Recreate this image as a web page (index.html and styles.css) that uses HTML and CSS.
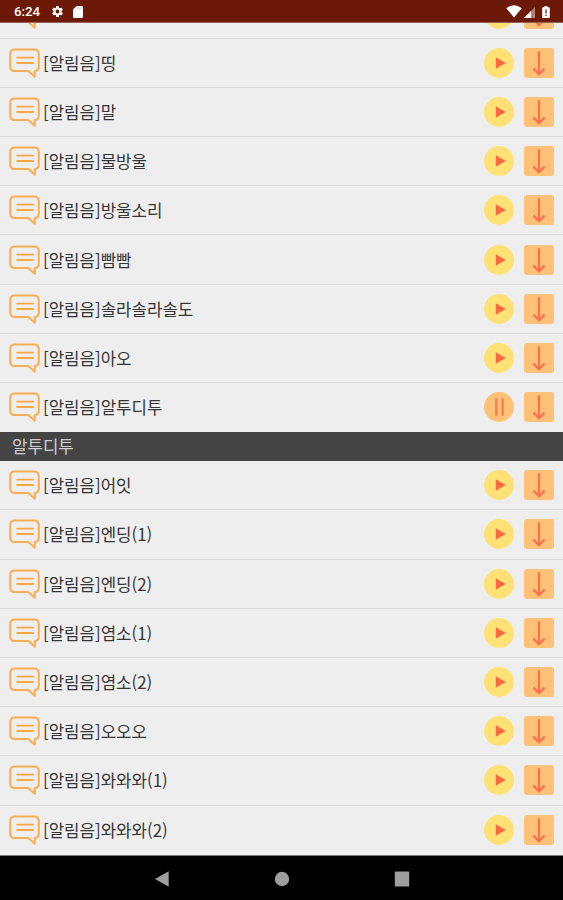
FILE: index.html
```html
<!DOCTYPE html>
<html lang="ko">
<head>
<meta charset="utf-8">
<meta name="viewport" content="width=device-width, initial-scale=1">
<title>알림음</title>
<link rel="stylesheet" href="styles.css">
</head>
<body>
<svg class="defs" aria-hidden="true">
  <symbol id="bubble" viewBox="0 0 32 32">
    <path d="M6.500 2.400H26Q30.800 2.400 30.800 7.200V19.200Q30.800 24 26.800 24V29.800L20.300 24H6.500Q2.200 24 2.200 19.200V7.200Q2.200 2.400 6.500 2.400Z" fill="none" stroke="#fcad53" stroke-width="2" stroke-linejoin="round"/>
    <path d="M9 10.600H25.200M9 16H25.200" fill="none" stroke="#fba742" stroke-width="1.900" stroke-linecap="round"/>
  </symbol>
  <symbol id="play" viewBox="0 0 30 30">
    <circle cx="15" cy="15" r="15" fill="#ffe175"/>
    <path d="M11.800 9.300L21.800 15L11.800 20.700Z" fill="#fd6840"/>
  </symbol>
  <symbol id="pause" viewBox="0 0 30 30">
    <circle cx="15" cy="15" r="15" fill="#ffc178"/>
    <path d="M12.300 6.200V23.800M18.600 6.200V23.800" stroke="#fd7950" stroke-width="2.300"/>
  </symbol>
  <symbol id="down" viewBox="0 0 30 30">
    <rect width="30" height="30" rx="3" fill="#ffc178"/>
    <path d="M15 3.200V26M9.400 20.600L15 26.200L20.600 20.600" fill="none" stroke="#fd704a" stroke-width="2.200"/>
  </symbol>
</svg>
<header class="status">
  <span class="clock">6:24</span>
  <svg class="gear" viewBox="0 0 24 24"><path fill="#fff" fill-rule="evenodd" d="M19.4 13a7.500 7.500 0 0 0 0-2l2.100-1.600a.5.5 0 0 0 .1-.6l-2-3.500a.5.5 0 0 0-.6-.2l-2.500 1a7 7 0 0 0-1.700-1L14.500 2.400a.5.5 0 0 0-.5-.4h-4a.5.5 0 0 0-.5.4L9.100 5.100a7 7 0 0 0-1.700 1l-2.500-1a.5.5 0 0 0-.6.2l-2 3.500a.5.5 0 0 0 .1.6L4.600 11a7.500 7.500 0 0 0 0 2l-2.100 1.600a.5.5 0 0 0-.1.6l2 3.500c.1.200.4.300.6.200l2.500-1a7 7 0 0 0 1.700 1l.4 2.700c0 .2.200.4.500.4h4c.200 0 .4-.2.500-.4l.4-2.700a7 7 0 0 0 1.700-1l2.500 1c.2.100.5 0 .6-.2l2-3.500a.5.5 0 0 0-.1-.6ZM12 8.500a3.500 3.500 0 1 1 0 7a3.500 3.500 0 0 1 0-7Z"/></svg>
  <svg class="card" viewBox="0 0 10 12"><path fill="#fff" d="M3.500 0H9q1 0 1 1V11q0 1-1 1H1q-1 0-1-1V3.500Z"/><path d="M4.200 1.500V3.500M6.200 1.500V3.500M8.200 1.500V3.500" stroke="#c9a59c" stroke-width=".7"/></svg>
  <span class="spacer"></span>
  <svg class="wifi" viewBox="0 0 16 13"><path fill="#fff" d="M8 12.500L.3 3.200Q8-2.600 15.700 3.200Z"/></svg>
  <svg class="signal" viewBox="0 0 11 11"><path fill="#b18278" d="M0 11L11 0V11Z"/><path fill="#fff" d="M0 11L7 4V11Z"/></svg>
  <svg class="battery" viewBox="0 0 8 12"><path fill="#fff" d="M2.500 0H5.500V1.300H7q.8 0 .8.8V11.200q0 .8-.8.8H1q-.8 0-.8-.8V2.100q0-.8.8-.8H2.500Z"/><path d="M4 3.500V7.500M4 8.700V10" stroke="#6d1907" stroke-width="1.300"/></svg>
</header>
<main class="list">
  <div class="row first"><svg class="bubble"><use href="#bubble"/></svg><span class="name"></span><svg class="btn"><use href="#play"/></svg><svg class="btn"><use href="#down"/></svg></div>
  <div class="row"><svg class="bubble"><use href="#bubble"/></svg><span class="name">[알림음]띵</span><svg class="btn"><use href="#play"/></svg><svg class="btn"><use href="#down"/></svg></div>
  <div class="row"><svg class="bubble"><use href="#bubble"/></svg><span class="name">[알림음]말</span><svg class="btn"><use href="#play"/></svg><svg class="btn"><use href="#down"/></svg></div>
  <div class="row"><svg class="bubble"><use href="#bubble"/></svg><span class="name">[알림음]물방울</span><svg class="btn"><use href="#play"/></svg><svg class="btn"><use href="#down"/></svg></div>
  <div class="row"><svg class="bubble"><use href="#bubble"/></svg><span class="name">[알림음]방울소리</span><svg class="btn"><use href="#play"/></svg><svg class="btn"><use href="#down"/></svg></div>
  <div class="row"><svg class="bubble"><use href="#bubble"/></svg><span class="name">[알림음]빰빰</span><svg class="btn"><use href="#play"/></svg><svg class="btn"><use href="#down"/></svg></div>
  <div class="row"><svg class="bubble"><use href="#bubble"/></svg><span class="name">[알림음]솔라솔라솔도</span><svg class="btn"><use href="#play"/></svg><svg class="btn"><use href="#down"/></svg></div>
  <div class="row"><svg class="bubble"><use href="#bubble"/></svg><span class="name">[알림음]아오</span><svg class="btn"><use href="#play"/></svg><svg class="btn"><use href="#down"/></svg></div>
  <div class="row last"><svg class="bubble"><use href="#bubble"/></svg><span class="name">[알림음]알투디투</span><svg class="btn"><use href="#pause"/></svg><svg class="btn"><use href="#down"/></svg></div>
  <div class="playing">알투디투</div>
  <div class="row"><svg class="bubble"><use href="#bubble"/></svg><span class="name">[알림음]어잇</span><svg class="btn"><use href="#play"/></svg><svg class="btn"><use href="#down"/></svg></div>
  <div class="row"><svg class="bubble"><use href="#bubble"/></svg><span class="name">[알림음]엔딩(1)</span><svg class="btn"><use href="#play"/></svg><svg class="btn"><use href="#down"/></svg></div>
  <div class="row"><svg class="bubble"><use href="#bubble"/></svg><span class="name">[알림음]엔딩(2)</span><svg class="btn"><use href="#play"/></svg><svg class="btn"><use href="#down"/></svg></div>
  <div class="row"><svg class="bubble"><use href="#bubble"/></svg><span class="name">[알림음]염소(1)</span><svg class="btn"><use href="#play"/></svg><svg class="btn"><use href="#down"/></svg></div>
  <div class="row"><svg class="bubble"><use href="#bubble"/></svg><span class="name">[알림음]염소(2)</span><svg class="btn"><use href="#play"/></svg><svg class="btn"><use href="#down"/></svg></div>
  <div class="row"><svg class="bubble"><use href="#bubble"/></svg><span class="name">[알림음]오오오</span><svg class="btn"><use href="#play"/></svg><svg class="btn"><use href="#down"/></svg></div>
  <div class="row"><svg class="bubble"><use href="#bubble"/></svg><span class="name">[알림음]와와와(1)</span><svg class="btn"><use href="#play"/></svg><svg class="btn"><use href="#down"/></svg></div>
  <div class="row last"><svg class="bubble"><use href="#bubble"/></svg><span class="name">[알림음]와와와(2)</span><svg class="btn"><use href="#play"/></svg><svg class="btn"><use href="#down"/></svg></div>
</main>
<nav class="nav">
  <svg viewBox="0 0 16 16"><path d="M1 8L14.700 .3V15.700Z"/></svg>
  <svg viewBox="0 0 16 16"><circle cx="8" cy="8" r="7.200"/></svg>
  <svg viewBox="0 0 16 16"><rect x=".8" y=".6" width="14.400" height="15" rx=".5"/></svg>
</nav>
</body>
</html>
```
FILE: styles.css
```css
* {
  box-sizing: border-box;
}

body {
  margin: 0;
  height: 900px;
  display: flex;
  flex-direction: column;
  overflow: hidden;
  background: #eee;
  color: #353535;
  font-family: "Noto Sans CJK KR", "Noto Sans", sans-serif;
}

svg {
  display: block;
  flex: none;
}

.defs {
  display: none;
}

.status {
  flex: none;
  height: 23px;
  padding: 1px 13px 0 14px;
  display: flex;
  align-items: center;
  background: #6d1907;
  border-bottom: 1px solid #986257;
}

.clock {
  width: 37px;
  color: #fff;
  font: 500 13.3px/20px Roboto, sans-serif;
}

.gear {
  width: 13px;
  height: 13px;
}

.card {
  width: 10px;
  height: 12px;
  margin-left: 9px;
}

.spacer {
  flex: 1;
}

.wifi {
  width: 16px;
  height: 13px;
}

.signal {
  width: 11px;
  height: 11px;
  margin: 2px 7px 0 2px;
}

.battery {
  width: 8px;
  height: 12px;
}

.list {
  flex: none;
  height: 832px;
  overflow: hidden;
}

.row {
  height: 49.2px;
  padding: 0 9px 0 8px;
  display: flex;
  align-items: center;
  border-bottom: 1px solid #dadada;
}

.row.first {
  margin-top: -33.5px;
}

.row.last {
  border-bottom-color: #eee;
}

.bubble {
  width: 32px;
  height: 32px;
}

.name {
  flex: 1;
  margin-left: 3px;
  font-size: 16.8px;
  line-height: 24px;
  white-space: nowrap;
}

.btn {
  width: 30px;
  height: 30px;
  margin-left: 10px;
}

.playing {
  height: 29px;
  padding-left: 12px;
  background: #444;
  color: #cfcfcf;
  font-size: 16.8px;
  line-height: 28px;
}

.nav {
  flex: 1;
  padding: 1px 153px 0 154px;
  display: flex;
  align-items: center;
  justify-content: space-between;
  background: #000;
  border-top: 1px solid #777;
}

.nav svg {
  width: 16px;
  height: 16px;
  fill: #9e9e9e;
}
```
